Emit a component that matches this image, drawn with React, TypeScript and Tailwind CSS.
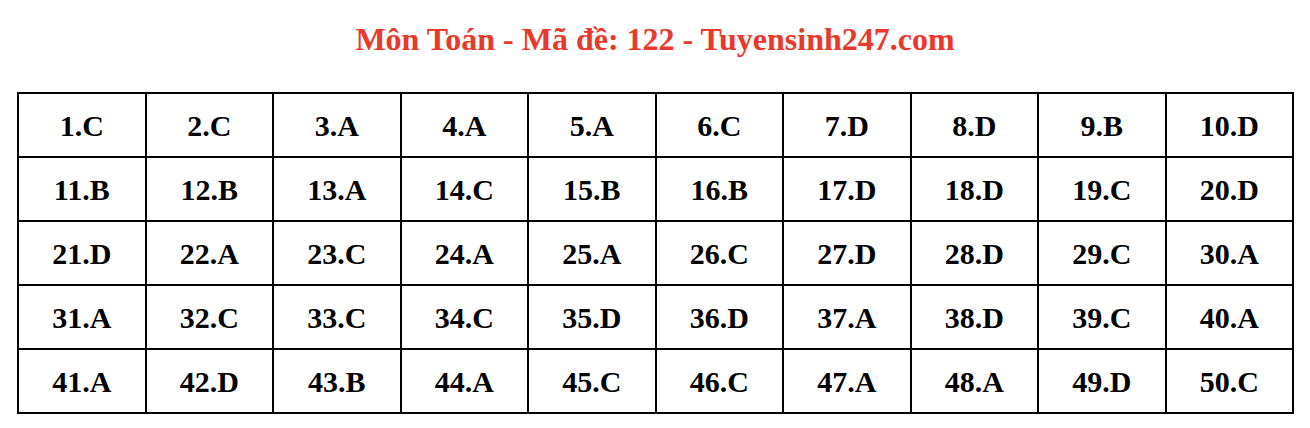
const answers = [
  ['C', 'C', 'A', 'A', 'A', 'C', 'D', 'D', 'B', 'D'],
  ['B', 'B', 'A', 'C', 'B', 'B', 'D', 'D', 'C', 'D'],
  ['D', 'A', 'C', 'A', 'A', 'C', 'D', 'D', 'C', 'A'],
  ['A', 'C', 'C', 'C', 'D', 'D', 'A', 'D', 'C', 'A'],
  ['A', 'D', 'B', 'A', 'C', 'C', 'A', 'A', 'D', 'C'],
];

export default function App() {
  return (
    <div className="w-[1310px] h-[428px] bg-white" style={{ fontFamily: '"Liberation Serif", "Times New Roman", serif' }}>
      <div className="h-[92px] pt-[20px] text-center">
        <h1 className="text-[32px] leading-[38px] font-bold text-[#e8392c]">
          Môn Toán - Mã đề: 122 - Tuyensinh247.com
        </h1>
      </div>
      <table className="ml-[17px] w-[1277px] border-collapse border-2 border-black table-fixed">
        <tbody>
          {answers.map((row, r) => (
            <tr key={r} className="h-[64px]">
              {row.map((a, c) => (
                <td
                  key={c}
                  className="border-2 border-black text-center align-middle text-[30px] font-bold text-black"
                >
                  {r * 10 + c + 1}.{a}
                </td>
              ))}
            </tr>
          ))}
        </tbody>
      </table>
    </div>
  );
}
